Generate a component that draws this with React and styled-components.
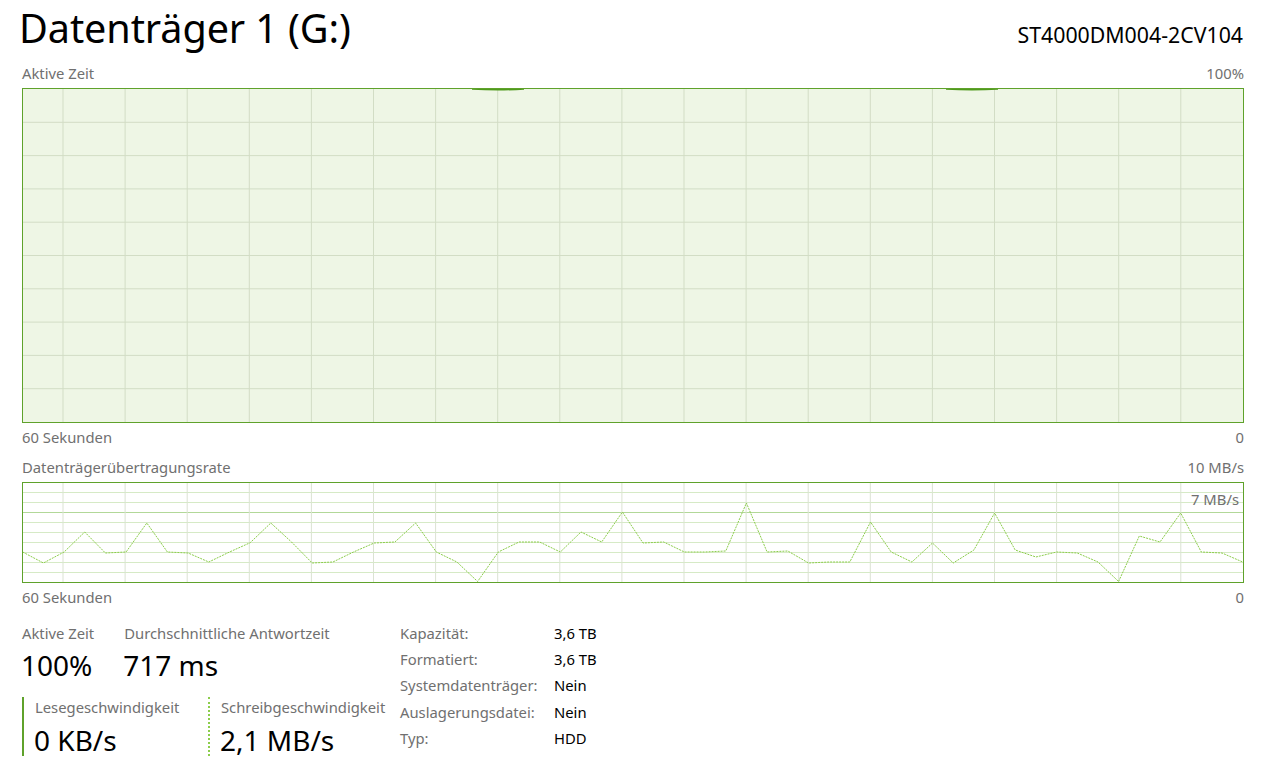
import React from "react";
import styled, { createGlobalStyle } from "styled-components";

const Global = createGlobalStyle`
  html, body { margin: 0; padding: 0; background: #ffffff; }
  body { font-family: "Noto Sans", "Open Sans", sans-serif; color: #000; }
`;

const Page = styled.div`
  width: 1264px;
  height: 760px;
  box-sizing: border-box;
  padding: 0 20px 0 22px;
  overflow: hidden;
`;

const Header = styled.div`
  display: flex;
  justify-content: space-between;
  align-items: baseline;
  height: 59px;
`;

const Title = styled.h1`
  margin: 0 0 0 -3px;
  font-weight: 400;
  font-size: 39.6px;
  line-height: 57px;
  letter-spacing: -0.1px;
`;

const Model = styled.div`
  font-size: 21.3px;
  margin-right: 1px;
`;

const LabelRow = styled.div`
  display: flex;
  justify-content: space-between;
  font-size: 14.8px;
  color: #707070;
  height: ${(p) => p.$h}px;
  line-height: ${(p) => p.$h}px;
`;

const Graph = styled.div`
  position: relative;
  height: ${(p) => p.$h}px;
  border: 1px solid #5fa22b;
  background: ${(p) => p.$bg};
  svg { display: block; width: 100%; height: 100%; }
`;

const Overlay = styled.div`
  position: absolute;
  top: 6px;
  right: 4px;
  font-size: 14.8px;
  color: #707070;
`;

const Stats = styled.div`
  display: flex;
  margin-top: 11px;
`;

const LeftStats = styled.div`
  width: 378px;
  display: flex;
  flex-direction: column;
`;

const StatRow = styled.div`
  display: flex;
  gap: ${(p) => p.$gap}px;
`;

const Stat = styled.div`
  display: flex;
  flex-direction: column;
`;

const StatLabel = styled.div`
  font-size: 14.8px;
  color: #707070;
  line-height: 20px;
`;

const StatValue = styled.div`
  font-size: 28px;
  line-height: ${(p) => p.$lh}px;
  margin-top: ${(p) => p.$mt || 0}px;
  margin-left: -1px;
`;

const Speed = styled.div`
  display: flex;
  flex-direction: column;
  width: ${(p) => p.$w}px;
  height: 59px;
  box-sizing: border-box;
  padding-left: 11px;
  border-left: 2px ${(p) => p.$line} ${(p) => p.$color};
  margin-top: 10px;
`;

const InfoTable = styled.div`
  display: grid;
  grid-template-columns: 154px auto;
  grid-auto-rows: 26.2px;
  align-content: start;
  font-size: 14.8px;
  line-height: 20px;
`;

const InfoKey = styled.div`
  color: #707070;
`;

const InfoVal = styled.div`
  color: #000;
`;

const vx = Array.from({ length: 19 }, (_, k) => 63 + 62.1 * k);

const rate = [
  552, 563, 552, 532, 553, 552, 523, 552, 553, 562,
  552, 542.7, 523, 542, 563, 562, 552, 543, 542, 523,
  552, 562, 581.5, 552, 542, 542, 552, 532, 542, 512,
  543, 542, 552, 552, 551, 503, 552, 551, 563, 562,
  562, 522, 552, 562, 543, 563, 550, 513, 550, 557,
  552, 553, 562, 581.5, 536, 542, 513, 552, 553, 562,
];
const ratePts = rate
  .map((y, i) => `${(22.7 + (1220 / 59) * i).toFixed(1)},${y}`)
  .join(" ");

function ActiveGraph() {
  return (
    <svg viewBox="23 89 1220 333" preserveAspectRatio="none">
      {vx.map((x) => (
        <line key={x} x1={x} x2={x} y1={89} y2={422} stroke="#d2ddc5" strokeWidth="1" />
      ))}
      {Array.from({ length: 9 }, (_, j) => 89 + 33.3 * (j + 1)).map((y) => (
        <line key={y} x1={23} x2={1243} y1={y} y2={y} stroke="#d2ddc5" strokeWidth="1" />
      ))}
      <path d="M472 89 Q498 90.6 524 89" stroke="#4f9a1c" strokeWidth="1.4" fill="none" />
      <path d="M946 89 Q972 90.6 998 89" stroke="#4f9a1c" strokeWidth="1.4" fill="none" />
    </svg>
  );
}

function RateGraph() {
  return (
    <svg viewBox="23 483 1220 99" preserveAspectRatio="none">
      {Array.from({ length: 9 }, (_, j) => 492.5 + 10 * j).map((y, j) => (
        <line
          key={y}
          x1={23}
          x2={1243}
          y1={y}
          y2={y}
          stroke={j === 2 ? "#b2d898" : "#d6eac6"}
          strokeWidth="1"
        />
      ))}
      {vx.map((x) => (
        <line key={x} x1={x} x2={x} y1={483} y2={582} stroke="#dbe3d2" strokeWidth="1" />
      ))}
      <polyline
        points={ratePts}
        fill="none"
        stroke="#8ccd4c"
        strokeWidth="1"
        strokeDasharray="2 1"
      />
    </svg>
  );
}

const info = [
  ["Kapazität:", "3,6 TB"],
  ["Formatiert:", "3,6 TB"],
  ["Systemdatenträger:", "Nein"],
  ["Auslagerungsdatei:", "Nein"],
  ["Typ:", "HDD"],
];

export default function App() {
  return (
    <>
      <Global />
      <Page>
        <Header>
          <Title>Datenträger 1 (G:)</Title>
          <Model>ST4000DM004-2CV104</Model>
        </Header>
        <LabelRow $h={29}>
          <span>Aktive Zeit</span>
          <span>100%</span>
        </LabelRow>
        <Graph $h={333} $bg="#eef6e5">
          <ActiveGraph />
        </Graph>
        <LabelRow $h={29}>
          <span>60 Sekunden</span>
          <span>0</span>
        </LabelRow>
        <LabelRow $h={30}>
          <span>Datenträgerübertragungsrate</span>
          <span>10 MB/s</span>
        </LabelRow>
        <Graph $h={99} $bg="#ffffff">
          <RateGraph />
          <Overlay>7 MB/s</Overlay>
        </Graph>
        <LabelRow $h={29}>
          <span>60 Sekunden</span>
          <span>0</span>
        </LabelRow>
        <Stats>
          <LeftStats>
            <StatRow $gap={30}>
              <Stat>
                <StatLabel>Aktive Zeit</StatLabel>
                <StatValue $lh={44}>100%</StatValue>
              </Stat>
              <Stat>
                <StatLabel>Durchschnittliche Antwortzeit</StatLabel>
                <StatValue $lh={44}>717 ms</StatValue>
              </Stat>
            </StatRow>
            <StatRow $gap={0}>
              <Speed $w={186} $line="solid" $color="#5fa22b">
                <StatLabel>Lesegeschwindigkeit</StatLabel>
                <StatValue $lh={38} $mt={4}>0 KB/s</StatValue>
              </Speed>
              <Speed $w={190} $line="dotted" $color="#8ccd4c">
                <StatLabel>Schreibgeschwindigkeit</StatLabel>
                <StatValue $lh={38} $mt={4}>2,1 MB/s</StatValue>
              </Speed>
            </StatRow>
          </LeftStats>
          <InfoTable>
            {info.map(([k, v]) => (
              <React.Fragment key={k}>
                <InfoKey>{k}</InfoKey>
                <InfoVal>{v}</InfoVal>
              </React.Fragment>
            ))}
          </InfoTable>
        </Stats>
      </Page>
    </>
  );
}
